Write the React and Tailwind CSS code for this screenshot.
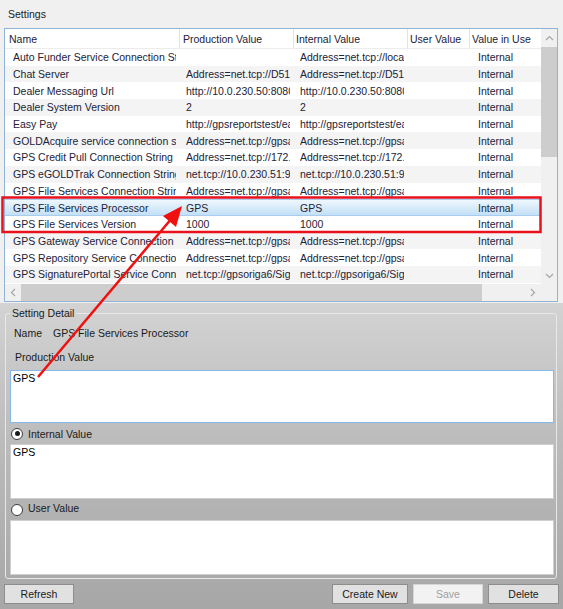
import React from "react";

const rows = [
  ["Auto Funder Service Connection String", "", "Address=net.tcp://localhost:8000/AutoFunder"],
  ["Chat Server", "Address=net.tcp://D51APP01:8001/Chat", "Address=net.tcp://D51APP01:8001/Chat"],
  ["Dealer Messaging Url", "http://10.0.230.50:8080/Messaging", "http://10.0.230.50:8080/Messaging"],
  ["Dealer System Version", "2", "2"],
  ["Easy Pay", "http://gpsreportstest/easypay", "http://gpsreportstest/easypay"],
  ["GOLDAcquire service connection string", "Address=net.tcp://gpsapp01:8002", "Address=net.tcp://gpsapp01:8002"],
  ["GPS Credit Pull Connection String", "Address=net.tcp://172.16.0.10:8003", "Address=net.tcp://172.16.0.10:8003"],
  ["GPS eGOLDTrak Connection String", "net.tcp://10.0.230.51:9000/eGOLDTrak", "net.tcp://10.0.230.51:9000/eGOLDTrak"],
  ["GPS File Services Connection String", "Address=net.tcp://gpsapp01:8004", "Address=net.tcp://gpsapp01:8004"],
  ["GPS File Services Processor", "GPS", "GPS"],
  ["GPS File Services Version", "1000", "1000"],
  ["GPS Gateway Service Connection", "Address=net.tcp://gpsapp01:8005", "Address=net.tcp://gpsapp01:8005"],
  ["GPS Repository Service Connection", "Address=net.tcp://gpsapp01:8006", "Address=net.tcp://gpsapp01:8006"],
  ["GPS SignaturePortal Service Connection", "net.tcp://gpsoriga6/SignaturePortal", "net.tcp://gpsoriga6/SignaturePortal"],
];

function Cell({ w, pl, children }) {
  return (
    <div className={`${w} ${pl} pr-[4px] shrink-0`}>
      <div className="overflow-hidden whitespace-nowrap">{children}</div>
    </div>
  );
}

function Radio({ checked }) {
  return (
    <div className="w-[12px] h-[12px] rounded-full border border-[#3c3c3c] bg-white flex items-center justify-center">
      {checked && <div className="w-[5px] h-[5px] rounded-full bg-[#1a1a1a]" />}
    </div>
  );
}

export default function App() {
  return (
    <div className="relative w-[563px] h-[609px] overflow-hidden font-['Liberation_Sans',Arial,sans-serif] text-[10.5px] leading-[12px] text-[#1a1a1a]">
      {/* Settings grid */}
      <div className="h-[303px] bg-[#f0f0f0] px-[4px] pt-[8px] flex flex-col">
        <div className="pl-[4px] h-[20px]">Settings</div>
        <div className="w-[554px] h-[274px] border border-[#90b4d8] bg-white flex flex-col">
          <div className="flex h-[255px]">
            <div className="flex-1 flex flex-col text-[#222238]">
              <div className="flex h-[20px] items-center border-b border-[#ececec]">
                <div className="w-[175px] h-full pl-[4px] flex items-center border-r border-[#e3e3e3]">Name</div>
                <div className="w-[114px] h-full pl-[3px] flex items-center border-r border-[#e3e3e3]">Production Value</div>
                <div className="w-[114px] h-full pl-[2px] flex items-center border-r border-[#e3e3e3]">Internal Value</div>
                <div className="w-[62px] h-full pl-[2px] flex items-center border-r border-[#e3e3e3]">User Value</div>
                <div className="w-[71px] h-full pl-[2px] flex items-center">Value in Use</div>
              </div>
              {rows.map((r, i) => {
                const selected = i === 9;
                const bg = selected
                  ? "bg-gradient-to-b from-[#eef7fe] to-[#c3e0f6] border-y border-[#a9cdee]"
                  : i % 2 === 1
                  ? "bg-[#f4f4f4]"
                  : "bg-white";
                return (
                  <div key={i} className={`flex h-[16.7px] items-center ${bg}`}>
                    <Cell w="w-[175px]" pl="pl-[8px]">{r[0]}</Cell>
                    <Cell w="w-[114px]" pl="pl-[6px]">{r[1]}</Cell>
                    <Cell w="w-[114px]" pl="pl-[6px]">{r[2]}</Cell>
                    <Cell w="w-[62px]" pl="pl-[6px]"></Cell>
                    <Cell w="w-[71px]" pl="pl-[8px]">Internal</Cell>
                  </div>
                );
              })}
            </div>
            {/* vertical scrollbar */}
            <div className="w-[16px] bg-[#f0f0f0] flex flex-col">
              <div className="h-[18px] flex items-center justify-center">
                <svg width="9" height="6" viewBox="0 0 9 6"><path d="M1 5L4.5 1.5L8 5" fill="none" stroke="#a6a6a6" strokeWidth="1.2" /></svg>
              </div>
              <div className="h-[110px] bg-[#cdcdcd]" />
              <div className="flex-1" />
              <div className="h-[17px] flex items-center justify-center">
                <svg width="9" height="6" viewBox="0 0 9 6"><path d="M1 1L4.5 4.5L8 1" fill="none" stroke="#a6a6a6" strokeWidth="1.2" /></svg>
              </div>
            </div>
          </div>
          {/* horizontal scrollbar */}
          <div className="flex h-[17px] bg-[#f0f0f0]">
            <div className="w-[16px] flex items-center justify-center">
              <svg width="6" height="9" viewBox="0 0 6 9"><path d="M5 1L1.5 4.5L5 8" fill="none" stroke="#a6a6a6" strokeWidth="1.2" /></svg>
            </div>
            <div className="w-[461px] bg-[#cdcdcd]" />
            <div className="flex-1" />
            <div className="w-[17px] flex items-center justify-center">
              <svg width="6" height="9" viewBox="0 0 6 9"><path d="M1 1L4.5 4.5L1 8" fill="none" stroke="#a6a6a6" strokeWidth="1.2" /></svg>
            </div>
            <div className="w-[16px] bg-[#f0f0f0]" />
          </div>
        </div>
      </div>

      {/* Setting detail */}
      <div className="h-[306px] bg-gradient-to-b from-[#d3d3d3] via-[#b9b9b9] to-[#a7a7a7] pt-[4px] flex flex-col">
        <fieldset className="mx-[5px] w-[552px] h-[272px] border border-[#e8e8e8] rounded-[3px] flex flex-col">
          <legend className="ml-[4px] px-[2px] leading-[12px]">Setting Detail</legend>
          <div className="flex mt-[7px] h-[14px] items-center pl-[8px]">
            <span className="w-[39px]">Name</span>
            <span>GPS File Services Processor</span>
          </div>
          <div className="mt-[10px] h-[14px] flex items-center pl-[9px]">Production Value</div>
          <div className="ml-[4px] mr-[2px] mt-[6px] h-[53px] bg-white border border-[#86b9ea] px-[2px] pt-[1px] text-[#000]">GPS</div>
          <div className="h-[21px] flex items-center gap-[5px] ml-[5px]">
            <Radio checked />
            <span>Internal Value</span>
          </div>
          <div className="ml-[4px] mr-[2px] h-[55px] bg-white border border-[#cfcfcf] px-[2px] pt-[1px] text-[#000]">GPS</div>
          <div className="h-[21px] flex items-center gap-[5px] ml-[5px]">
            <Radio />
            <span className="-mt-[4px]">User Value</span>
          </div>
          <div className="ml-[4px] mr-[2px] h-[55px] bg-white border border-[#cfcfcf]" />
        </fieldset>
        <div className="flex mt-[5px] h-[20px] pl-[4px] pr-[4px] gap-[4px]">
          <button className="w-[70px] h-[20px] bg-[#e1e1e1] border border-[#8d8d8d] text-[#1a1a1a]">Refresh</button>
          <div className="flex-1" />
          <button className="w-[76px] h-[20px] bg-[#e1e1e1] border border-[#8d8d8d] text-[#1a1a1a]">Create New</button>
          <button className="w-[70px] h-[20px] bg-[#f2f2f2] border border-[#d6d6d6] text-[#a0a0a0] ml-[1px]">Save</button>
          <button className="w-[71px] h-[20px] bg-[#e1e1e1] border border-[#8d8d8d] text-[#1a1a1a] ml-[1px]">Delete</button>
        </div>
      </div>

      {/* red annotation overlay */}
      <svg className="absolute left-0 top-0 pointer-events-none" width="563" height="609" viewBox="0 0 563 609">
        <rect x="2.5" y="197.5" width="538" height="34.5" fill="none" stroke="#e8111c" strokeWidth="2.5" />
        <line x1="38" y1="377" x2="172" y2="218" stroke="#f01010" strokeWidth="2.5" />
        <polygon points="182,206 163,216 176,227" fill="#f01010" />
      </svg>
    </div>
  );
}
